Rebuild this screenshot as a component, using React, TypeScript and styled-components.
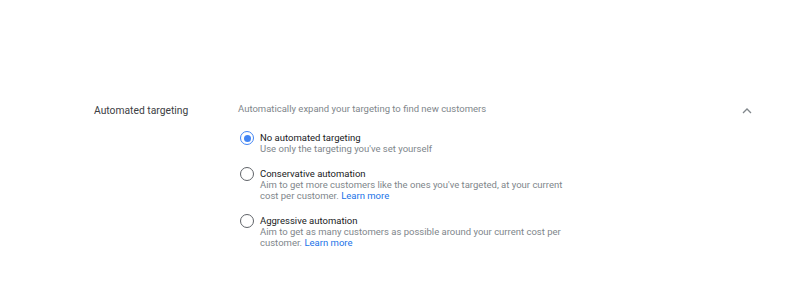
import React, { useState } from "react";
import styled, { createGlobalStyle } from "styled-components";

const Global = createGlobalStyle`
  html, body { margin: 0; padding: 0; background: #fff; }
  body { font-family: Roboto, "Noto Sans", Arial, sans-serif; -webkit-font-smoothing: antialiased; }
`;

const Page = styled.div`
  width: 793px;
  height: 292px;
  box-sizing: border-box;
  padding: 102px 40px 0 94px;
`;

const Row = styled.section`
  display: flex;
  align-items: flex-start;
`;

const Label = styled.div`
  width: 144px;
  flex: none;
  font-size: 10.3px;
  line-height: 12px;
  color: #3c4043;
  padding-top: 3px;
`;

const Content = styled.div`
  flex: 1;
  display: flex;
  flex-direction: column;
`;

const Description = styled.div`
  font-size: 9.5px;
  line-height: 11px;
  color: #80868b;
  padding-top: 1px;
`;

const Options = styled.div`
  display: flex;
  flex-direction: column;
  gap: 13.5px;
  margin-top: 18px;
`;

const Option = styled.label`
  display: flex;
  align-items: flex-start;
  gap: 6px;
  cursor: pointer;
  padding-left: 2px;
`;

const Radio = styled.span<{ $checked: boolean }>`
  flex: none;
  width: 14px;
  height: 14px;
  box-sizing: border-box;
  border-radius: 50%;
  border: 1.5px solid ${(p) => (p.$checked ? "#4285f4" : "#5f6368")};
  display: flex;
  align-items: center;
  justify-content: center;
  margin-top: -1px;
  &::after {
    content: "";
    width: 7px;
    height: 7px;
    border-radius: 50%;
    background: #4285f4;
    display: ${(p) => (p.$checked ? "block" : "none")};
  }
`;

const OptionText = styled.div`
  max-width: 312px;
  font-size: 9.5px;
  line-height: 11.2px;
`;

const Title = styled.div`
  color: #202124;
`;

const Sub = styled.div`
  color: #80868b;
`;

const Link = styled.a`
  color: #1a73e8;
  text-decoration: none;
`;

const Chevron = styled.button`
  flex: none;
  width: 12px;
  height: 12px;
  margin-top: 3px;
  padding: 0;
  border: none;
  background: none;
  display: flex;
  align-items: center;
  justify-content: center;
`;

const options = [
  { title: "No automated targeting", sub: "Use only the targeting you've set yourself", link: false },
  {
    title: "Conservative automation",
    sub: "Aim to get more customers like the ones you've targeted, at your current cost per customer.",
    link: true,
  },
  {
    title: "Aggressive automation",
    sub: "Aim to get as many customers as possible around your current cost per customer.",
    link: true,
  },
];

export default function App() {
  const [sel, setSel] = useState(0);
  return (
    <>
      <Global />
      <Page>
        <Row>
          <Label>Automated targeting</Label>
          <Content>
            <Description>Automatically expand your targeting to find new customers</Description>
            <Options>
              {options.map((o, i) => (
                <Option key={o.title} onClick={() => setSel(i)}>
                  <Radio $checked={sel === i} />
                  <OptionText>
                    <Title>{o.title}</Title>
                    <Sub>
                      {o.sub}
                      {o.link && (
                        <>
                          {" "}
                          <Link href="#">Learn more</Link>
                        </>
                      )}
                    </Sub>
                  </OptionText>
                </Option>
              ))}
            </Options>
          </Content>
          <Chevron aria-label="Collapse">
            <svg width="10" height="6" viewBox="0 0 10 6">
              <path d="M1 5 L5 1 L9 5" fill="none" stroke="#80868b" strokeWidth="1.3" />
            </svg>
          </Chevron>
        </Row>
      </Page>
    </>
  );
}
